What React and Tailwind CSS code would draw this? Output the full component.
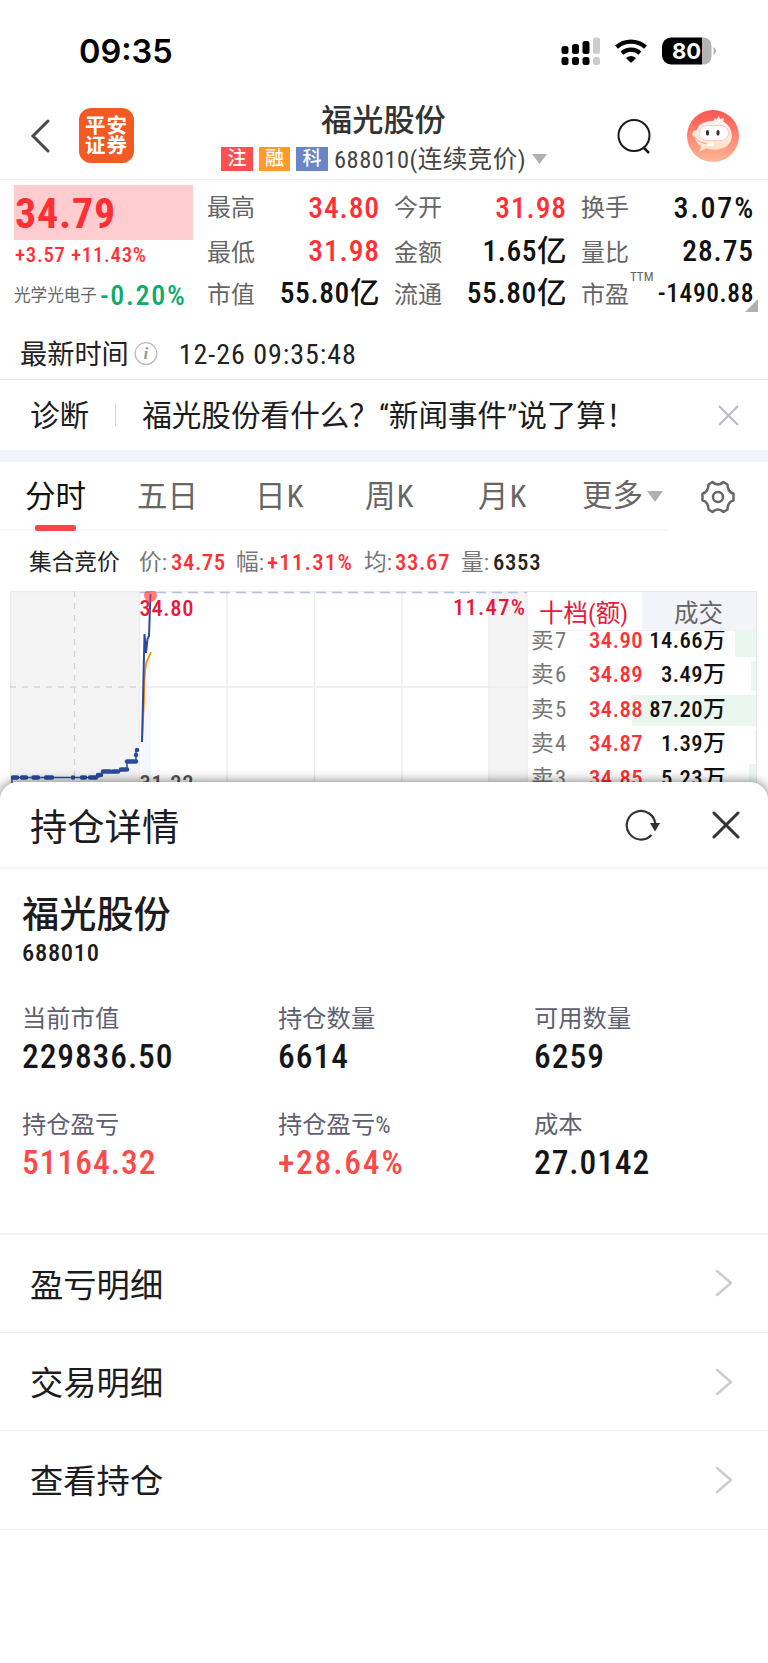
import React from 'react'

const FONT = 'font-[Roboto,"Noto_Sans_CJK_SC",sans-serif] [font-stretch:87.5%]';

const quotes = [
    [
        { label: '最高', value: '34.80', style: 'text-[29.5px] tracking-[0.9px] -mr-px text-[#ff2f33]' },
        { label: '今开', value: '31.98', style: 'text-[29.5px] tracking-[0.9px] -mr-px text-[#ff2f33]' },
        { label: '换手', value: '3.07%', style: 'text-[30px] tracking-[1.8px] -mr-[2px] text-[#111]' },
    ],
    [
        { label: '最低', value: '31.98', style: 'text-[29.5px] tracking-[0.9px] -mr-px text-[#ff2f33]' },
        { label: '金额', value: '1.65亿', style: 'text-[29.5px] tracking-[0.5px] -mr-px text-[#111]' },
        { label: '量比', value: '28.75', style: 'text-[29.5px] tracking-[0.9px] -mr-px text-[#111]' },
    ],
    [
        { label: '市值', value: '55.80亿', style: 'text-[29.5px] tracking-[0.6px] -mr-px text-[#111]' },
        { label: '流通', value: '55.80亿', style: 'text-[29.5px] tracking-[0.6px] -mr-px text-[#111]' },
        { label: '市盈', value: '-1490.88', style: 'text-[25.5px] tracking-[0.6px] -mr-px text-[#111]', sup: 'TTM' },
    ],
];

const asks = [
    { name: '卖7', price: '34.90', amount: '14.66万', bar: 21 },
    { name: '卖6', price: '34.89', amount: '3.49万', bar: 5 },
    { name: '卖5', price: '34.88', amount: '87.20万', bar: 124 },
    { name: '卖4', price: '34.87', amount: '1.39万', bar: 1 },
    { name: '卖3', price: '34.85', amount: '5.23万', bar: 7 },
];

const position = [
    { label: '当前市值', value: '229836.50', style: 'tracking-[0.9px] text-[#15161a]' },
    { label: '持仓数量', value: '6614', style: 'tracking-[1px] text-[#15161a]' },
    { label: '可用数量', value: '6259', style: 'tracking-[1px] text-[#15161a]' },
    { label: '持仓盈亏', value: '51164.32', style: 'tracking-[1px] text-[#fb4a4a]' },
    { label: '持仓盈亏%', value: '+28.64%', style: 'tracking-[1.8px] text-[#fb4a4a]' },
    { label: '成本', value: '27.0142', style: 'tracking-[0.9px] text-[#15161a]' },
];

const links = ['盈亏明细', '交易明细', '查看持仓'];

function StatusBar() {
    return (
        <div className="flex h-[92px] items-center pt-[12px] pr-[51px] pl-[79px]">
            <div className='font-[Inter,sans-serif] text-[32.5px] leading-none font-semibold text-black'>09:35</div>
            <svg className="ml-auto" width="156" height="30" viewBox="561 37 156 30">
                <g fill="#000">
                    <rect x="561.5" y="46" width="7" height="8" rx="2.5" />
                    <rect x="572" y="44" width="7" height="10" rx="2.5" />
                    <rect x="582.5" y="41" width="7" height="13" rx="2.5" />
                    <rect x="561.5" y="57" width="7" height="8" rx="2.5" />
                    <rect x="572" y="57" width="7" height="8" rx="2.5" />
                    <rect x="582.5" y="57" width="7" height="8" rx="2.5" />
                </g>
                <g fill="#ccc">
                    <rect x="593" y="37.500" width="7" height="16.500" rx="2.500" />
                    <rect x="593" y="57" width="7" height="8" rx="2.5" />
                </g>
                <g fill="none" stroke="#000" strokeWidth="4.300">
                    <path d="M616.500 47.200 A21.500 21.500 0 0 1 645.500 47.200" />
                    <path d="M622 53.200 A13.300 13.300 0 0 1 640 53.200" />
                </g>
                <path d="M626 58 Q631 54.200 636 58 L631.800 62.300 Q631 63 630.200 62.300 Z" fill="#000" />
                <path d="M702 37.500 H703 A8 8 0 0 1 711.500 46 V56 A8 8 0 0 1 703 64.500 H702 Z" fill="#b3b3b3" />
                <path d="M702 37.500 H671 A9 9 0 0 0 662 46.500 V55.500 A9 9 0 0 0 671 64.500 H702 Z" fill="#000" />
                <path d="M713.500 47 Q716 48.500 716 51 Q716 53.500 713.500 55 Z" fill="#b3b3b3" />
                <text x="686.500" y="59" textAnchor="middle" fontFamily="Inter" fontWeight="700" fontSize="22" fill="#fff">80</text>
            </svg>
        </div>
    );
}

function Header() {
    return (
        <div className="flex h-[88px] items-center border-b border-[#eee] pr-[29px] pl-[30px]">
            <svg width="21" height="36" viewBox="0 0 21 36" fill="none" stroke="#4a4a4a" strokeWidth="3" strokeLinecap="round">
                <path d="M18 3 L3 18 L18 33" />
            </svg>
            <div className="ml-7 flex size-[55px] items-center rounded-[12px] bg-[#f15a22] pl-[6px] text-white">
                <span className="w-[45px] text-[20.5px] leading-[20px] font-bold tracking-[1px] break-all">平安证券</span>
            </div>
            <div className="ml-[87px] flex flex-col pt-[5px]">
                <div className="pl-[100px] text-[31.2px] leading-[34px] font-medium text-[#333]">福光股份</div>
                <div className="mt-[7px] flex h-[28px] items-center">
                    <span className="flex h-6 w-8 items-center justify-center bg-[#ff4f4f] text-[19px] leading-none font-medium text-white">注</span>
                    <span className="ml-[6px] flex h-6 w-[31px] items-center justify-center bg-[#ff9a2b] text-[19px] leading-none font-medium text-white">融</span>
                    <span className="ml-[6px] flex h-6 w-8 items-center justify-center bg-[#6a84c8] text-[19px] leading-none font-medium text-white">科</span>
                    <span className="ml-[6px] pt-[3px] text-[24.5px] leading-[28px] tracking-[0.5px] text-[#444]">688010(连续竞价)</span>
                    <svg className="ml-[6px]" width="15" height="10" viewBox="0 0 15 10"><path d="M0 0 H15 L7.500 10 Z" fill="#b0b0b0" /></svg>
                </div>
            </div>
            <svg className="ml-auto" width="34" height="37" viewBox="0 0 34 37" fill="none" stroke="#1a1a1a" strokeWidth="2">
                <circle cx="17" cy="18.500" r="15.500" />
                <path d="M26.500 30.500 L32 36" strokeWidth="2.500" />
            </svg>
            <svg className="ml-[36px]" width="52" height="52" viewBox="0 0 52 52">
                <defs>
                    <linearGradient id="sky" x1="0" y1="0" x2="0" y2="1">
                        <stop offset="0" stopColor="#fb5555" />
                        <stop offset="0.500" stopColor="#fd8570" />
                        <stop offset="1" stopColor="#feb795" />
                    </linearGradient>
                    <linearGradient id="face" x1="0" y1="0" x2="0" y2="1">
                        <stop offset="0" stopColor="#fff3ee" />
                        <stop offset="0.600" stopColor="#ffe9dc" />
                        <stop offset="1" stopColor="#ffdcb8" />
                    </linearGradient>
                </defs>
                <circle cx="26" cy="26" r="26" fill="url(#sky)" />
                <path d="M26 12 L28 8 L29.500 9.500 L32 6 L33 9 L37 8 L36 13 Z" fill="#fff3ea" />
                <path d="M16 13 Q26 9 37 12 Q45 17 45 27 Q43 38 31 39.500 Q23 40 19 38.500 L12 42 L14 36 Q9 33 8 28 Q4 26 6 21.500 Q8 20 10 20 Q11 15 16 13 Z" fill="url(#face)" />
                <rect x="12.500" y="15.500" width="29" height="15" rx="7.500" fill="#fff" stroke="#fbc9bb" />
                <rect x="19" y="20" width="3" height="5.500" rx="1.500" fill="#333" />
                <rect x="29.500" y="20" width="3" height="5.500" rx="1.500" fill="#333" />
                <path d="M7 26 Q11 33 21 34" fill="none" stroke="#f9a082" strokeWidth="1" />
                <rect x="20" y="32.500" width="7" height="3.500" rx="1.700" fill="#fff" />
            </svg>
        </div>
    );
}

function QuotePanel() {
    return (
        <div className="relative flex h-[134px] pt-[5px] pr-[14px] pl-[14px]">
            <div className="w-[179px]">
                <div className="flex h-[55px] items-center bg-[#ffcdcf] pt-[3px] pl-px text-[42px] leading-none font-bold tracking-[0.8px] text-[#ff2f33]">34.79</div>
                <div className="mt-[3px] pl-px text-[20.8px] leading-[24px] font-medium tracking-[0.7px] whitespace-nowrap text-[#ff2f33]">+3.57 +11.43%</div>
                <div className="mt-[13px] flex items-center whitespace-nowrap">
                    <span className="pt-px text-[16.600px] leading-[30px] text-[#666]">光学光电子</span>
                    <span className="ml-[3px] pt-px text-[28px] leading-[30px] font-medium tracking-[1.7px] text-[#0cac6a]">-0.20%</span>
                </div>
            </div>
            <div className="ml-[14px] flex flex-1 flex-col pt-[2px]">
                {quotes.map((row, i) => (
                    <div key={i} className={i === 0 ? 'flex h-[44px] items-center leading-none' : 'flex h-[43px] items-center pt-[2px] leading-none'}>
                        {row.map((q, j) => (
                            <div key={q.label} className={j === 0 ? 'flex w-[172px] items-center justify-between' : 'ml-[15px] flex w-[172px] items-center justify-between'}>
                                <span className={i === 0 ? 'relative text-[24px] text-[#666]' : 'relative pt-[2px] text-[24px] text-[#666]'}>
                                    {q.label}
                                    {q.sup && <span className="absolute -top-[11px] left-[49px] text-[13px]">{q.sup}</span>}
                                </span>
                                <span className={`${q.style} font-medium`}>{q.value}</span>
                            </div>
                        ))}
                    </div>
                ))}
            </div>
            <svg className="absolute right-[10px] bottom-[2px]" width="13" height="13" viewBox="0 0 13 13"><path d="M13 0 V13 H0 Z" fill="#b0b0b0" /></svg>
        </div>
    );
}

function Notices() {
    return (
        <>
            <div className="flex h-[66px] items-center border-b border-[#e9e9f0] pt-[15px] pl-[20px] text-[#222]">
                <span className="pt-[2px] text-[27.2px] leading-[40px]">最新时间</span>
                <svg className="ml-[5px]" width="24" height="24" viewBox="0 0 24 25">
                    <circle cx="12" cy="12" r="11.300" fill="none" stroke="#bbb" strokeWidth="1.300" />
                    <text x="12" y="18" textAnchor="middle" fontFamily="Liberation Serif" fontStyle="italic" fontWeight="700" fontSize="18" fill="#999">i</text>
                </svg>
                <span className="ml-[21px] pt-px text-[28px] leading-[40px] tracking-[0.95px]">12-26 09:35:48</span>
            </div>
            <div className="flex h-[70px] items-center pr-[29px] pl-[30px] text-[29.6px] leading-[40px] text-[#1c1c20]">
                <span className="pt-px">诊断</span>
                <span className="ml-[26px] h-[22px] w-px bg-[#d5d5da]" />
                <span className="ml-[26px] pt-px">福光股份看什么？“新闻事件”说了算！</span>
                <svg className="ml-auto" width="21" height="21" viewBox="0 0 21 21" stroke="#b9b9cc" strokeWidth="2">
                    <path d="M1 1 L20 20 M20 1 L1 20" />
                </svg>
            </div>
            <div className="h-3 bg-[#f3f4fa]" />
        </>
    );
}

function ChartTabs() {
    return (
        <div className="flex h-[69px] text-[30.5px] leading-[70px] whitespace-nowrap text-[#666]">
            <div className="flex w-[669px] border-b-2 border-[#f7f7f9] pl-[25px]">
                <div className="relative w-[112px] text-[#111]">
                    分时
                    <span className="absolute top-[63px] left-[10px] h-[6px] w-[41px] rounded-[2px] bg-[#fb4448]" />
                </div>
                <div className="w-[118px]">五日</div>
                <div className="w-[110px] tracking-[1.3px]">日K</div>
                <div className="w-[113px] tracking-[1.3px]">周K</div>
                <div className="w-[104px] tracking-[1.3px]">月K</div>
                <div className="flex items-center pt-px">
                    更多
                    <svg className="ml-[4px]" width="16" height="11" viewBox="0 0 16 11"><path d="M0 0 H16 L8 11 Z" fill="#b0b0b0" /></svg>
                </div>
            </div>
            <svg className="mt-[18px] ml-[32px]" width="34" height="34" viewBox="-17 -17 34 34" fill="none" stroke="#666" strokeWidth="2.500" strokeLinejoin="round">
                <path d="M-9.500 -12.500 L-5.500 -15 Q-3 -12.500 0 -12.500 Q3 -12.500 5.500 -15 L9.500 -12.500 Q9.500 -9 11 -6.500 Q12.500 -4 15.500 -3.500 V3.500 Q12.500 4 11 6.500 Q9.500 9 9.500 12.500 L5.500 15 Q3 12.500 0 12.500 Q-3 12.500 -5.500 15 L-9.500 12.500 Q-9.500 9 -11 6.500 Q-12.500 4 -15.500 3.500 V-3.500 Q-12.500 -4 -11 -6.500 Q-9.500 -9 -9.500 -12.500 Z" />
                <circle r="5" />
            </svg>
        </div>
    );
}

function AuctionInfo() {
    return (
        <div className="flex h-[60px] items-center pt-[5px] pl-[29px] text-[22.7px] leading-none whitespace-nowrap text-[#777]">
            <span className="w-[110px] text-[#222]">集合竞价</span>
            <span className="w-[32px]">价:</span>
            <span className="w-[65px] font-medium tracking-[0.6px] text-[#ff2f33]">34.75</span>
            <span className="w-[31px]">幅:</span>
            <span className="w-[97px] font-medium tracking-[1.3px] text-[#ff2f33]">+11.31%</span>
            <span className="w-[31px]">均:</span>
            <span className="w-[66px] font-medium tracking-[0.7px] text-[#ff2f33]">33.67</span>
            <span className="w-[32px]">量:</span>
            <span className="font-medium tracking-[0.7px] text-[#222]">6353</span>
        </div>
    );
}

function MinuteChart() {
    return (
        <svg width="518" height="209" viewBox="10 591 518 209">
            <rect x="10" y="591" width="129" height="209" fill="#f4f4f4" />
            <rect x="489" y="591" width="38" height="209" fill="#f4f4f5" />
            <rect x="142" y="660" width="9" height="140" fill="#f5f7fd" />
            <g stroke="#ececec" strokeWidth="1.300" fill="none">
                <path d="M10 591.500 H528 M10.500 591 V800 M139.500 591 V800 M139 687 H528 M227 591 V800 M314.500 591 V800 M402 591 V800 M489 591 V800 M527 591 V800" />
            </g>
            <path d="M10 687 H138 M74.500 591 V800" stroke="#d4d4d4" strokeWidth="1.300" strokeDasharray="6 6" />
            <path d="M140 592.500 H527" stroke="#b4bfe2" strokeWidth="1.300" strokeDasharray="10 6" />
            <path d="M142 741 L144 700 Q144.500 665 147 661 L151 652" fill="none" stroke="#ff8c00" strokeWidth="1.800" />
            <path d="M142 742 L144.500 634 L146 653 L147.500 639 L149 636 L150.500 594" fill="none" stroke="#2a4b9b" strokeWidth="2" />
            <circle cx="150.500" cy="595.500" r="6.500" fill="#ff3b3b" fillOpacity="0.650" />
            <path d="M12 785 V777.500 H97 L102 775 V771.500 H119 L122 769.500 H127 V761.500 H136 V750" fill="none" stroke="#2a4b9b" strokeWidth="1.500" />
            <path d="M13 777.500 H17 M22 777.500 H26 M33.500 777.500 H38 M46 777.500 H52 M73 777.500 h.1 M82 777.500 H85 M90 777.500 H96 M98 775 h3 M103 771.500 H110 M113 771.500 H118 M121 769.500 H127 M127 761.500 H136 M136 755 v.1 M137 750 v.1" stroke="#2a4b9b" strokeWidth="4.500" strokeLinecap="round" />
            <g fontFamily="Roboto" fontSize="22.500" fontWeight="500">
                <text x="139.500" y="616" fill="#e8183c" textLength="54">34.80</text>
                <text x="525" y="614.500" textAnchor="end" fill="#e8183c" textLength="72">11.47%</text>
                <text x="139.500" y="791" fill="#555" textLength="54">31.22</text>
            </g>
        </svg>
    );
}

function OrderBook() {
    return (
        <div className="w-[229px] border-t border-r border-[#e8e8ea] leading-none">
            <div className="relative z-10 flex h-[39px] items-center border-b border-[#f0f0f2] bg-white text-[24.5px]">
                <div className="flex h-full w-[114px] items-center pt-[6px] pl-[11px] text-[#e8183c]">十档(额)</div>
                <div className="flex h-full flex-1 items-center bg-[#f3f4fa] pt-[6px] pl-8 text-[#666]">成交</div>
            </div>
            <div className="-mt-[7px]">
                {asks.map((a) => (
                    <div key={a.name} className="relative flex h-[34.5px] items-center pr-[30px] pl-[3px] text-[22.7px]">
                        <div className="absolute top-[2px] right-0 h-[30.5px] bg-[#eaf7ee]" style={{ width: a.bar }} />
                        <span className="relative w-[58px] tracking-[1.2px] text-[#777]">{a.name}</span>
                        <span className="relative w-[54px] font-medium tracking-[0.5px] text-[#ff2f33]">{a.price}</span>
                        <span className="relative flex-1 text-right font-medium tracking-[0.4px] whitespace-nowrap text-[#111]">{a.amount}</span>
                    </div>
                ))}
            </div>
        </div>
    );
}

function PositionSheet() {
    return (
        <div className="relative -mt-[18px] h-[881px] rounded-t-[18px] bg-white shadow-[0_0_12px_rgba(0,0,0,0.55)]">
            <div className="flex h-[87px] items-center border-b-2 border-[#f5f5f9] pr-[28px] pl-[30px]">
                <span className="pt-[8px] text-[37.3px] leading-none text-[#1c1c20]">持仓详情</span>
                <svg className="ml-auto" width="36" height="34" viewBox="0 0 36 34" fill="none" stroke="#333" strokeWidth="2.200">
                    <path d="M26.500 27 A14.300 14.300 0 1 1 30.300 16" />
                    <path d="M25 15 H35 L30 23.500 Z" fill="#333" stroke="none" />
                </svg>
                <svg className="ml-[51px]" width="28" height="28" viewBox="0 0 28 28" stroke="#333" strokeWidth="3" strokeLinecap="round">
                    <path d="M2 2 L26 26 M26 2 L2 26" />
                </svg>
            </div>
            <div className="h-[365.5px] border-b-2 border-[#f5f5f9] pt-[24px] pl-[22px]">
                <div className="text-[37.2px] leading-[44px] font-medium text-[#1c1c20]">福光股份</div>
                <div className="mt-[4px] text-[24.5px] leading-[24px] font-medium tracking-[0.7px] text-[#1c1c20]">688010</div>
                <div className="mt-[36px] grid grid-cols-[256px_256px_1fr] gap-y-[30px]">
                    {position.map((p) => (
                        <div key={p.label}>
                            <div className="text-[24.3px] leading-[36px] text-[#606070]">{p.label}</div>
                            <div className={`${p.style} text-[33.5px] leading-[40px] font-medium`}>{p.value}</div>
                        </div>
                    ))}
                </div>
            </div>
            {links.map((text) => (
                <div key={text} className="flex h-[98.400px] items-center border-b border-[#ededf2] pr-[35px] pl-[30px]">
                    <span className="pt-[4px] text-[33.3px] leading-none text-[#1c1c20]">{text}</span>
                    <svg className="ml-auto" width="18" height="28" viewBox="0 0 18 28" fill="none" stroke="#ccc" strokeWidth="2.500" strokeLinecap="round" strokeLinejoin="round">
                        <path d="M2 2 L16 14 L2 26" />
                    </svg>
                </div>
            ))}
        </div>
    );
}

export default function App() {
    return (
        <div className={`${FONT} h-[1663px] w-[768px] overflow-hidden bg-white`}>
            <div className="h-[800px] overflow-hidden">
                <StatusBar />
                <Header />
                <QuotePanel />
                <Notices />
                <ChartTabs />
                <AuctionInfo />
                <div className="flex h-[209px] pl-[10px]">
                    <MinuteChart />
                    <OrderBook />
                </div>
            </div>
            <PositionSheet />
        </div>
    )
}
